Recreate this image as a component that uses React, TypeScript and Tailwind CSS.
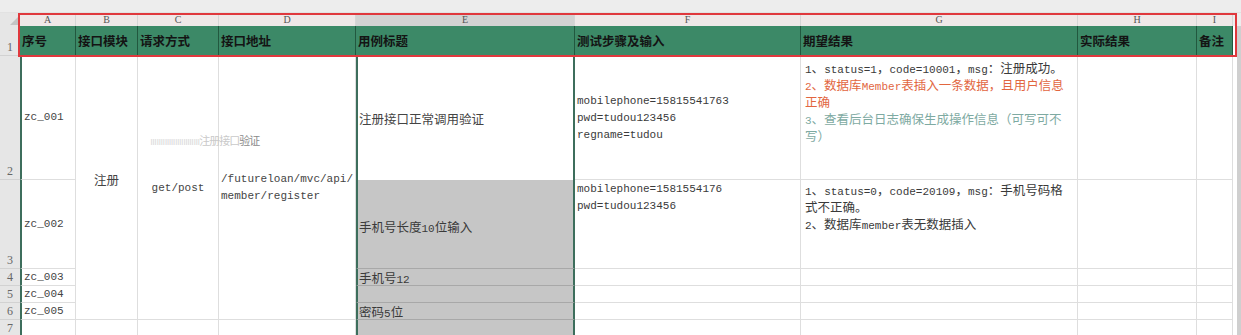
import React from "react";

// Split a string into CJK / Latin runs so each gets its own font + size
const Mix = ({ text }: { text: string }) => {
  const parts = text.split(/([\u3000-\u303f\u4e00-\u9fff\uff00-\uffef]+)/);
  return (
    <>
      {parts.map((p, i) =>
        p === "" ? null : /[\u3000-\u303f\u4e00-\u9fff\uff00-\uffef]/.test(p) ? (
          <span key={i} className="font-['Noto_Sans_CJK_SC',sans-serif] text-[12.5px] leading-[17px]">
            {p}
          </span>
        ) : (
          <span key={i} className="font-['Liberation_Mono',monospace] text-[11px] leading-[17px]">
            {p}
          </span>
        )
      )}
    </>
  );
};

const Line = ({ text, color = "text-[#3a3a3a]" }: { text: string; color?: string }) => (
  <div className={`h-[17px] flex items-baseline whitespace-nowrap ${color}`}>
    <Mix text={text} />
  </div>
);

const letters = ["A", "B", "C", "D", "E", "F", "G", "H", "I"];
const headers = ["序号", "接口模块", "请求方式", "接口地址", "用例标题", "测试步骤及输入", "期望结果", "实际结果", "备注"];

const cell = "border-r border-b border-[#dedede] bg-white";
const eCell = "border-x-2 border-x-[#3d6e5c] border-b border-b-[#a8a8a8] bg-[#c6c6c6]";
const rowNum =
  "bg-[#e6e6e6] border-b border-[#d2d2d2] flex items-end justify-center font-['Liberation_Serif',serif] text-[12px] leading-[15px] text-[#666]";

export default function App() {
  return (
    <div className="relative w-[1241px] h-[335px] overflow-hidden bg-white text-[#3a3a3a]">
      {/* top strip */}
      <div className="h-[13px] bg-[#ededed] border-b border-[#e2e2e2]" />

      <div className="grid grid-cols-[20px_56px_62px_81px_137px_219px_226px_277px_119px_36px_1fr] grid-rows-[13px_30px_124px_89px_17px_17px_17px_30px]">
        {/* corner */}
        <div className="bg-[#e6e6e6] flex items-end justify-end">
          <div className="w-0 h-0 border-l-[9px] border-l-transparent border-b-[9px] border-b-[#c4c4c4] mr-[1px] mb-[1px]" />
        </div>
        {letters.map((l) => (
          <div
            key={l}
            className={`flex items-center justify-center font-['Liberation_Serif',serif] text-[10px] text-[#555] border-r border-[#d6d6d6] ${
              l === "E" ? "bg-[#d3d3d3]" : "bg-[#efe8e8]"
            }`}
          >
            {l}
          </div>
        ))}
        <div className="bg-[#cfcfcf] row-span-7 row-start-2 col-start-11 border-l-[4px] border-white" />
        <div className="bg-[#ededed] row-start-1 col-start-11" />

        {/* header row */}
        <div className={`${rowNum} items-center`}>1</div>
        {headers.map((h) => (
          <div
            key={h}
            className="bg-[#3c8967] border-r border-[#22583f] flex items-center pl-[2px] font-['Noto_Sans_CJK_SC',sans-serif] font-bold text-[12.5px] text-[#141414]"
          >
            {h}
          </div>
        ))}

        {/* row numbers */}
        <div className={`${rowNum} col-start-1 row-start-3`}>2</div>
        <div className={`${rowNum} col-start-1 row-start-4`}>3</div>
        <div className={`${rowNum} col-start-1 row-start-5`}>4</div>
        <div className={`${rowNum} col-start-1 row-start-6`}>5</div>
        <div className={`${rowNum} col-start-1 row-start-7`}>6</div>
        <div className={`${rowNum} col-start-1 row-start-8 items-start pt-[1px]`}>7</div>

        {/* column A */}
        <div className={`${cell} col-start-2 row-start-3 border-l-2 border-l-[#3d6e5c] flex items-center pl-[2px]`}>
          <Line text="zc_001" color="text-[#444]" />
        </div>
        <div className={`${cell} col-start-2 row-start-4 border-l-2 border-l-[#3d6e5c] flex items-center pl-[2px]`}>
          <Line text="zc_002" color="text-[#444]" />
        </div>
        {["zc_003", "zc_004", "zc_005", ""].map((t, i) => (
          <div
            key={i}
            className={`${cell} col-start-2 border-l-2 border-l-[#3d6e5c] pl-[2px] ${
              ["row-start-5", "row-start-6", "row-start-7", "row-start-8"][i]
            }`}
          >
            {t && <Line text={t} color="text-[#444]" />}
          </div>
        ))}

        {/* merged B, C, D */}
        <div className={`${cell} col-start-3 row-start-3 row-span-5 flex justify-center pt-[115px]`}>
          <Line text="注册" color="text-[#444]" />
        </div>
        <div className={`${cell} col-start-4 row-start-3 row-span-5 flex justify-center pt-[124px]`}>
          <Line text="get/post" color="text-[#444]" />
        </div>
        <div className={`${cell} col-start-5 row-start-3 row-span-5 pt-[115px] pl-[2px]`}>
          <Line text="/futureloan/mvc/api/" color="text-[#444]" />
          <Line text="member/register" color="text-[#444]" />
        </div>
        <div className={`${cell} col-start-3 row-start-8`} />
        <div className={`${cell} col-start-4 row-start-8`} />
        <div className={`${cell} col-start-5 row-start-8`} />

        {/* column E */}
        <div className="col-start-6 row-start-3 border-x-2 border-x-[#3d6e5c] bg-white flex items-center pl-[1px]">
          <Line text="注册接口正常调用验证" color="text-[#444]" />
        </div>
        <div className={`${eCell} col-start-6 row-start-4 flex items-center pl-[1px] pt-[4px]`}>
          <Line text="手机号长度10位输入" color="text-[#3a3a3a]" />
        </div>
        <div className={`${eCell} col-start-6 row-start-5 pl-[1px]`}>
          <Line text="手机号12" color="text-[#3a3a3a]" />
        </div>
        <div className={`${eCell} col-start-6 row-start-6`} />
        <div className={`${eCell} col-start-6 row-start-7 pl-[1px]`}>
          <Line text="密码5位" color="text-[#3a3a3a]" />
        </div>
        <div className={`${eCell} col-start-6 row-start-8`} />

        {/* column F */}
        <div className={`${cell} col-start-7 row-start-3 flex flex-col justify-center pl-[2px] pt-[2px]`}>
          <Line text="mobilephone=15815541763" />
          <Line text="pwd=tudou123456" />
          <Line text="regname=tudou" />
        </div>
        <div className={`${cell} col-start-7 row-start-4 pl-[2px] pt-[1px]`}>
          <Line text="mobilephone=1581554176" />
          <Line text="pwd=tudou123456" />
        </div>

        {/* column G */}
        <div className={`${cell} col-start-8 row-start-3 pl-[4px] pt-[3px]`}>
          <Line text="1、status=1，code=10001，msg：注册成功。" />
          <Line text="2、数据库Member表插入一条数据，且用户信息" color="text-[#e2663f]" />
          <Line text="正确" color="text-[#e2663f]" />
          <Line text="3、查看后台日志确保生成操作信息（可写可不" color="text-[#7eaaa2]" />
          <Line text="写）" color="text-[#7eaaa2]" />
        </div>
        <div className={`${cell} col-start-8 row-start-4 pl-[4px] pt-[1px]`}>
          <Line text="1、status=0，code=20109，msg：手机号码格" />
          <Line text="式不正确。" />
          <Line text="2、数据库member表无数据插入" />
        </div>

        {/* empty cells */}
        <div className={`${cell} col-start-9 row-start-3`} />
        <div className={`${cell} col-start-10 row-start-3`} />
        <div className={`${cell} col-start-9 row-start-4`} />
        <div className={`${cell} col-start-10 row-start-4`} />
        {["row-start-5", "row-start-6", "row-start-7", "row-start-8"].map((r) => (
          <React.Fragment key={r}>
            <div className={`${cell} col-start-7 ${r}`} />
            <div className={`${cell} col-start-8 ${r}`} />
            <div className={`${cell} col-start-9 ${r}`} />
            <div className={`${cell} col-start-10 ${r}`} />
          </React.Fragment>
        ))}
      </div>

      {/* rendering glitch over C/D */}
      <div className="absolute left-[150px] top-[133px] h-[14px] flex items-center font-['Noto_Sans_CJK_SC',sans-serif] text-[11px] leading-[14px] text-[#c9c9c9] tracking-[-1px] whitespace-nowrap">
        <span className="text-[#dddddd]">ıııııııııııııııııııııııı</span>
        <span>注册接口</span>
        <span className="text-[#8a8a8a]">验证</span>
      </div>

      {/* selection highlight */}
      <div className="absolute left-[18px] top-[13px] w-[1219px] h-[44px] border-2 border-[#e0383d] pointer-events-none" />
    </div>
  );
}
